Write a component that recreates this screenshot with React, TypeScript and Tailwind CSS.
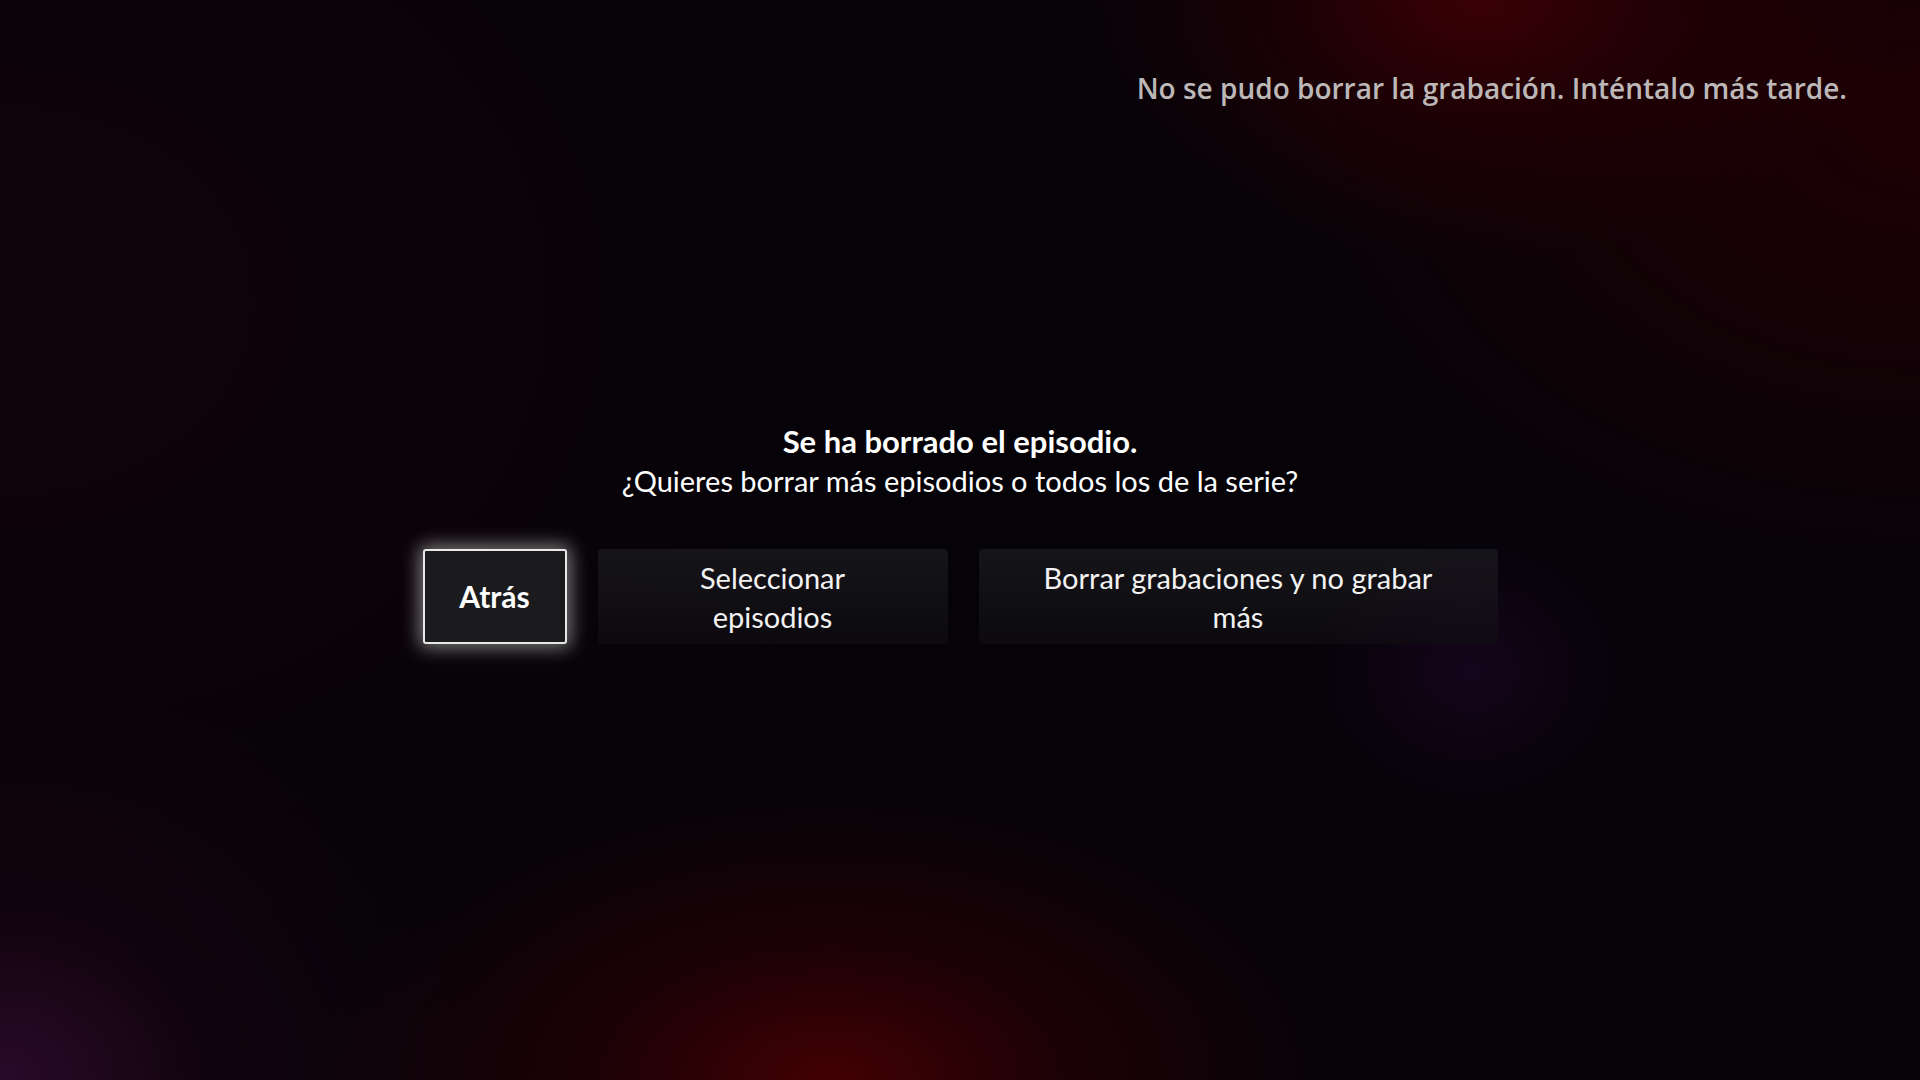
import React from "react"

const options = [
  { id: "back", label: "Atrás", width: "w-[144px]", focused: true },
  { id: "select", label: "Seleccionar episodios", width: "w-[350px]", textWidth: "max-w-[200px]" },
  { id: "delete", label: "Borrar grabaciones y no grabar más", width: "w-[519px]", textWidth: "max-w-[430px]" },
]

export default function App() {
  return (
    <div className="relative h-[1080px] w-full overflow-hidden bg-[#050308] font-['Lato','Open_Sans',sans-serif] text-white bg-[radial-gradient(ellipse_420px_260px_at_1480px_0px,#3a0004_0%,rgba(40,0,4,0.6)_45%,transparent_100%),radial-gradient(ellipse_520px_300px_at_830px_1080px,#420003_0%,rgba(50,0,4,0.5)_45%,transparent_100%),radial-gradient(ellipse_500px_400px_at_0px_1080px,#2a0a2a_0%,rgba(30,4,20,0.5)_40%,transparent_100%),radial-gradient(ellipse_700px_500px_at_1920px_120px,#1e0004_0%,transparent_100%),radial-gradient(ellipse_160px_140px_at_1470px_670px,rgba(40,8,50,0.45)_0%,transparent_100%),radial-gradient(ellipse_900px_700px_at_0px_300px,#100309_0%,transparent_100%)]">
      {/* error toast */}
      <div className="flex justify-end pt-[70px] pr-[73px]">
        <p className="font-['Open_Sans',sans-serif] text-[28px] leading-[36px] font-semibold text-[#bdb8b8]">
          No se pudo borrar la grabación. Inténtalo más tarde.
        </p>
      </div>

      {/* dialog */}
      <div className="mt-[316px] flex flex-col items-center">
        <div className="text-center leading-[39px]">
          <p className="text-[31px] font-bold">Se ha borrado el episodio.</p>
          <p className="text-[29px] font-normal">¿Quieres borrar más episodios o todos los de la serie?</p>
        </div>

        <div className="mt-[49px] flex items-stretch gap-[31px]">
          {options.map((opt) =>
            opt.focused ? (
              <button
                key={opt.id}
                className={`${opt.width} flex h-[95px] items-center justify-center rounded-[3px] border-2 border-[#e8e8e8] bg-[#1b1b1d] text-[30px] font-bold shadow-[0_0_18px_4px_rgba(255,255,255,0.45)]`}
              >
                {opt.label}
              </button>
            ) : (
              <button
                key={opt.id}
                className={`${opt.width} flex h-[95px] items-center justify-center rounded-[4px] bg-[linear-gradient(180deg,rgba(30,30,34,0.65),rgba(16,14,18,0.6))] text-[29px] leading-[39px] font-normal text-[#f2f2f2]`}
              >
                <span className={`${opt.textWidth} text-center`}>{opt.label}</span>
              </button>
            )
          )}
        </div>
      </div>
    </div>
  )
}
